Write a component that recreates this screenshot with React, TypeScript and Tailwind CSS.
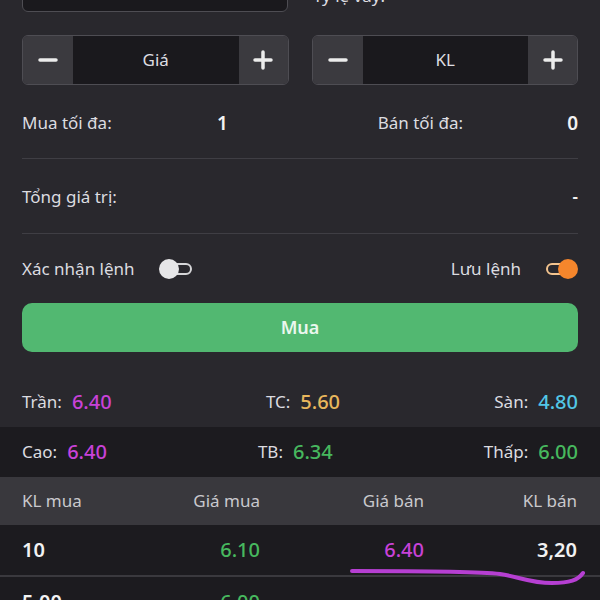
import React from 'react';

const StepIcon: React.FC<{ plus?: boolean }> = ({ plus }) => (
  <svg width="20" height="20" viewBox="0 0 20 20" className="text-[#ececec]">
    <line x1="2" y1="10" x2="18" y2="10" stroke="currentColor" strokeWidth="3.5" strokeLinecap="round" />
    {plus && <line x1="10" y1="2" x2="10" y2="18" stroke="currentColor" strokeWidth="3.5" strokeLinecap="round" />}
  </svg>
);

const Stepper: React.FC<{ label: string }> = ({ label }) => (
  <div className="flex h-[50px] flex-1 overflow-hidden rounded-[6px] border border-[#4e4d53]">
    <button className="flex w-[50px] items-center justify-center bg-[#3b3a3f]">
      <StepIcon />
    </button>
    <div className="flex flex-1 items-center justify-center bg-[#1a191d] text-[17px] text-[#dedee2]">{label}</div>
    <button className="flex w-[49px] items-center justify-center bg-[#3b3a3f]">
      <StepIcon plus />
    </button>
  </div>
);

const Stat: React.FC<{ label: string; value: string; color: string }> = ({ label, value, color }) => (
  <div className="flex items-center gap-[10px]">
    <span className="text-[#dcdce0]">{label}</span>
    <span className={`text-[20px] font-medium ${color}`}>{value}</span>
  </div>
);

const Divider = () => <div className="h-px bg-[#3f3e44]" />;

const App: React.FC = () => {
  return (
    <div className="relative h-[600px] w-[600px] overflow-hidden bg-[#29282d] font-['Noto_Sans',sans-serif] text-[17px]">
      <div className="px-[22px]">
        {/* field cut at top of screen */}
        <div className="-mt-[38px] flex h-[50px] gap-[23px]">
          <div className="h-[50px] w-[266px] rounded-[6px] border border-[#4e4d53] bg-[#1a191d]" />
          <div className="flex flex-1 items-end pb-[4px] pl-[2px] leading-[24px] text-[#dcdce0]">Tỷ lệ vay:</div>
        </div>

        <div className="mt-[23px] flex gap-[23px]">
          <Stepper label="Giá" />
          <Stepper label="KL" />
        </div>

        <div className="flex h-[73px] items-center pt-[3px] text-[#dcdce0]">
          <span className="w-[195px]">Mua tối đa:</span>
          <span className="text-[19px] font-semibold text-[#f2f2f2]">1</span>
          <span className="ml-auto">Bán tối đa:</span>
          <span className="w-[115px] text-right text-[19px] font-semibold text-[#f2f2f2]">0</span>
        </div>
        <Divider />

        <div className="flex h-[74px] items-center justify-between pt-[2px] text-[#dcdce0]">
          <span>Tổng giá trị:</span>
          <span className="font-semibold text-[#f2f2f2]">-</span>
        </div>
        <Divider />

        <div className="flex h-[69px] items-center text-[#dcdce0]">
          <span>Xác nhận lệnh</span>
          <div className="relative ml-[24px] h-[20px] w-[33px]">
            <div className="absolute right-0 top-[4px] h-[12px] w-[26px] rounded-full border-2 border-[#d6d6d8] bg-[#29282d]" />
            <div className="absolute left-0 top-0 h-[20px] w-[20px] rounded-full bg-[#e6e6e8]" />
          </div>
          <span className="ml-auto">Lưu lệnh</span>
          <div className="relative ml-[25px] h-[20px] w-[32px]">
            <div className="absolute left-0 top-[4px] h-[12px] w-[26px] rounded-full border-2 border-[#f3c48f] bg-[#29282d]" />
            <div className="absolute right-0 top-0 h-[20px] w-[20px] rounded-full bg-[#f5862c]" />
          </div>
        </div>

        <button className="flex h-[49px] w-full items-center justify-center rounded-[10px] bg-[#52b871] text-[18px] font-semibold text-[#eaf7ee]">
          Mua
        </button>
      </div>

      <div className="mt-[25px] flex h-[50px] items-center justify-between px-[22px]">
        <Stat label="Trần:" value="6.40" color="text-[#c842d8]" />
        <Stat label="TC:" value="5.60" color="text-[#e8b75c]" />
        <Stat label="Sàn:" value="4.80" color="text-[#52c6e6]" />
      </div>
      <div className="flex h-[50px] items-center justify-between bg-[#1c1b1f] px-[22px]">
        <Stat label="Cao:" value="6.40" color="text-[#c842d8]" />
        <Stat label="TB:" value="6.34" color="text-[#47b85e]" />
        <Stat label="Thấp:" value="6.00" color="text-[#47b85e]" />
      </div>

      <div className="grid h-[48px] grid-cols-[120px_118px_164px_153px] items-center bg-[#39383d] px-[22px] text-[#c9c9cd]">
        <span>KL mua</span>
        <span className="text-right">Giá mua</span>
        <span className="text-right">Giá bán</span>
        <span className="text-right">KL bán</span>
      </div>
      <div className="grid h-[50px] grid-cols-[120px_118px_164px_153px] items-center bg-[#1c1b1f] px-[22px] text-[20px]">
        <span className="font-semibold text-[#f2f2f2]">10</span>
        <span className="text-right font-medium text-[#47b85e]">6.10</span>
        <span className="text-right font-medium text-[#c842d8]">6.40</span>
        <span className="text-right font-semibold text-[#f2f2f2]">3,20</span>
      </div>
      <div className="h-[2px] bg-[#3a393e]" />
      <div className="grid h-[50px] grid-cols-[120px_118px_164px_153px] items-center bg-[#1c1b1f] px-[22px] text-[20px]">
        <span className="font-semibold text-[#f2f2f2]">5,00</span>
        <span className="text-right font-medium text-[#47b85e]">6.00</span>
        <span />
        <span />
      </div>

      {/* hand-drawn highlight */}
      <svg className="pointer-events-none absolute left-0 top-0" width="600" height="600">
        <path
          d="M352 571 C 420 571, 475 571, 500 574 C 520 577, 530 583, 552 583 C 570 583, 578 580, 583 573"
          fill="none"
          stroke="#b63fd2"
          strokeWidth="4"
          strokeLinecap="round"
        />
      </svg>
    </div>
  );
};

export default App;
